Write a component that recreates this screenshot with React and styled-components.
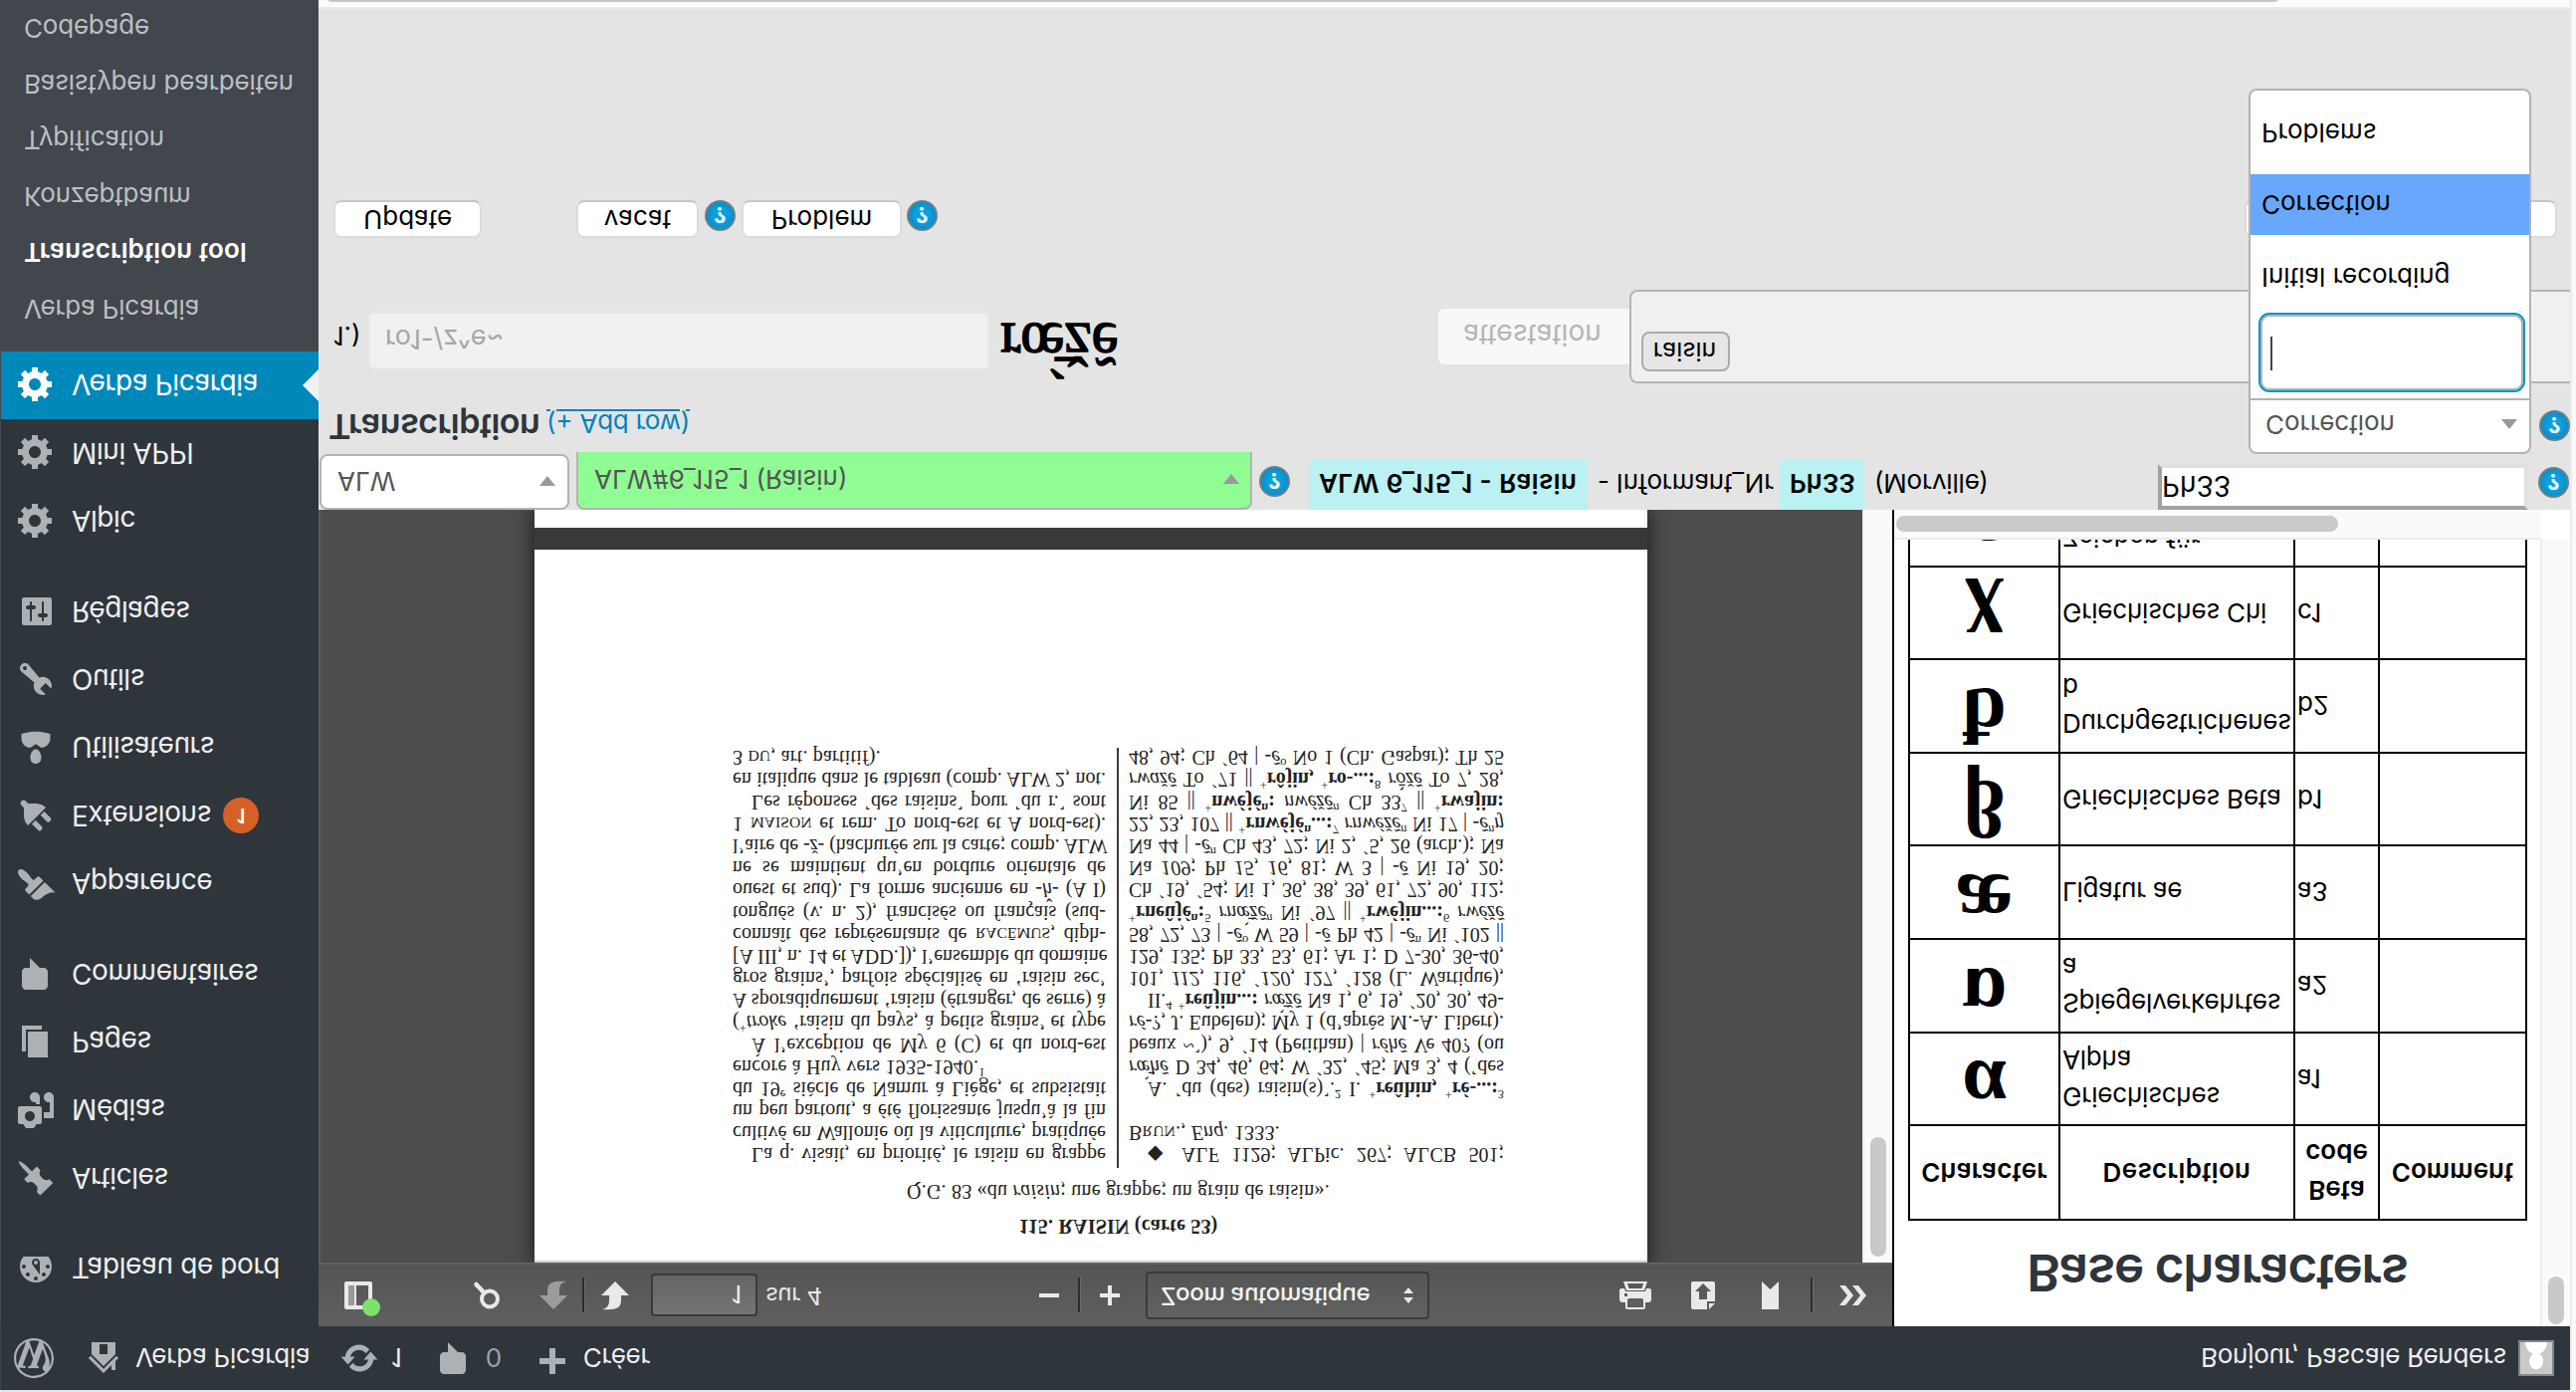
import React from 'react';
import styled, { createGlobalStyle, css } from 'styled-components';

const sans = `Inter, "Open Sans", "Liberation Sans", sans-serif`;
const serif = `"Liberation Serif", "DejaVu Serif", serif`;

const GlobalStyle = createGlobalStyle`
  * { box-sizing: border-box; }
  html, body { margin: 0; padding: 0; overflow: hidden; background: #e4e4e4; }
`;

const Screen = styled.div`
  width: 2588px;
  height: 1398px;
  display: flex;
  flex-direction: column;
  overflow: hidden;
  transform: scaleY(-1);
  font-family: ${sans};
  font-size: 26px;
  line-height: 1.4;
  color: #000;
  background: #e4e4e4;
`;

const TopEdge = styled.div`
  height: 2px;
  flex: none;
  background: #e6e6e6;
`;

const Columns = styled.div`
  display: flex;
  flex: 1;
  min-height: 0;
`;

const Frame = styled.div`
  width: 2582px;
  flex: none;
  display: flex;
  flex-direction: column;
`;

const Gutter = styled.div`
  flex: 1;
  background: #f9f9f9;
  border-left: 2px solid #ebebeb;
`;

const Label = styled.span`
  padding-top: 2px;
`;

/* ---------- admin bar ---------- */

const AdminBar = styled.header`
  height: 64px;
  flex: none;
  display: flex;
  align-items: center;
  padding: 0 16px 0 13px;
  background: #2e353b;
  color: #eee;
  border-left: 1px solid #3c4349;
`;

const BarItem = styled.div`
  display: flex;
  align-items: center;
  gap: ${(p) => p.$gap || 0}px;
  margin-left: ${(p) => (p.$push ? 'auto' : `${p.$ml || 0}px`)};
  letter-spacing: -0.25px;
  white-space: nowrap;
  color: ${(p) => (p.$dim ? '#9ca1a6' : '#eee')};
`;

const Avatar = styled.div`
  width: 36px;
  height: 36px;
  margin-left: 12px;
  border: 2px solid #82878c;
  background: #c9c9c9;
  svg { display: block; }
`;

const Glyph = styled.svg`
  display: block;
  flex: none;
  width: ${(p) => p.$size || 40}px;
  height: ${(p) => p.$size || 40}px;
  fill: ${(p) => p.$color || '#acb1b6'};
`;

/* ---------- side menu ---------- */

const Body = styled.div`
  display: flex;
  flex: 1;
  min-height: 0;
`;

const Sidebar = styled.nav`
  width: 320px;
  flex: none;
  display: flex;
  flex-direction: column;
  padding-top: 24.3px;
  background: #2e353b;
  border-left: 1px solid #434a50;
  overflow: hidden;
`;

const MenuItem = styled.div`
  position: relative;
  height: 68.4px;
  flex: none;
  display: flex;
  align-items: center;
  gap: 16px;
  padding-left: 15px;
  margin-top: ${(p) => (p.$section ? 22 : 0)}px;
  font-size: 28px;
  letter-spacing: -0.4px;
  color: ${(p) => (p.$active ? '#fff' : '#eee')};
  ${(p) =>
    p.$active &&
    css`
      margin-left: -1px;
      padding-left: 16px;
      background: #0088bb;
      &::after {
        content: '';
        position: absolute;
        right: 0;
        top: 18px;
        border: 16px solid transparent;
        border-left-width: 0;
        border-right-color: #f1f1f1;
      }
    `}
`;

const CountBadge = styled.span`
  width: 36px;
  height: 36px;
  margin-left: -4px;
  border-radius: 50%;
  background: #d76027;
  color: #fff;
  font-size: 20px;
  font-weight: 600;
  line-height: 37px;
  text-align: center;
`;

const SubMenu = styled.div`
  flex: 1;
  padding: 15px 0 0 23px;
  background: #42464d;
`;

const SubItem = styled.div`
  height: 56.4px;
  line-height: 56.4px;
  font-size: 26px;
  white-space: nowrap;
  color: ${(p) => (p.$current ? '#fff' : '#bcbfc3')};
  font-weight: ${(p) => (p.$current ? 600 : 400)};
  letter-spacing: ${(p) => (p.$current ? 0.15 : -0.2)}px;
`;

/* ---------- main panes ---------- */

const Main = styled.main`
  flex: 1;
  min-width: 0;
  display: flex;
  flex-direction: column;
`;

const Panes = styled.div`
  display: flex;
  height: 820px;
  flex: none;
`;

const Viewer = styled.section`
  width: 1581px;
  display: flex;
  flex-direction: column;
  background: #4d4d4d;
`;

const Toolbar = styled.div`
  height: 64px;
  flex: none;
  display: flex;
  align-items: center;
  padding: 0 24px 0 26px;
  background: linear-gradient(#606060, #545454);
  border-bottom: 2px solid #626262;
  color: #e6e6e6;
  font-size: 24px;
`;

const ToolIcon = styled.svg`
  display: block;
  flex: none;
  overflow: visible;
  width: ${(p) => p.$w}px;
  height: ${(p) => p.$h || 28}px;
  margin-left: ${(p) => p.$ml || 0}px;
  fill: ${(p) => p.$color || '#e9e9e9'};
`;

const Divider = styled.span`
  width: 3px;
  height: 35px;
  margin-left: ${(p) => p.$ml}px;
  background: #2c2c2c;
  border-right: 1px solid #6c6c6c;
`;

const PageInput = styled.div`
  width: 107px;
  height: 43px;
  margin-left: 22px;
  padding-right: 14px;
  border: 2px solid #3a3a3a;
  border-radius: 4px;
  background: linear-gradient(#757575, #646464);
  line-height: 41px;
  text-align: right;
  color: #f2f2f2;
`;

const PageCount = styled.span`
  width: 57px;
  margin-left: 8px;
  letter-spacing: -0.3px;
  white-space: nowrap;
`;

const ZoomSelect = styled.div`
  width: 285px;
  height: 48px;
  margin-left: 26px;
  padding: 0 14px 0 13px;
  display: flex;
  align-items: center;
  justify-content: space-between;
  border: 2px solid #3b3b3b;
  border-radius: 4px;
  background: linear-gradient(#626262, #555);
  color: #f2f2f2;
  font-weight: 500;
  white-space: nowrap;
  letter-spacing: -0.3px;
`;

const ViewerBody = styled.div`
  flex: 1;
  min-height: 0;
  display: flex;
  box-shadow: inset 2px 0 0 #5c5c5c;
`;

const PageArea = styled.div`
  flex: 1;
  padding-left: 217px;
  display: flex;
  flex-direction: column;
  overflow: hidden;
`;

const PageStack = styled.div`
  width: 1118px;
  height: 756px;
  background: #393939;
  box-shadow: 0 0 18px 2px rgba(0, 0, 0, 0.6);
  display: flex;
  flex-direction: column;
  gap: 22px;
`;

const Sheet = styled.article`
  height: ${(p) => p.$h}px;
  flex: none;
  padding: 25px 0 0 199px;
  background: #fff;
  font-family: ${serif};
  font-size: 20px;
  line-height: 22.2px;
  color: #222;
  box-shadow: ${(p) => (p.$first ? 'inset 0 2px 0 #cfcfcf' : 'none')};
`;

const SheetTitle = styled.div`
  width: 775px;
  text-align: center;
  font-weight: ${(p) => (p.$bold ? 700 : 400)};
  letter-spacing: ${(p) => p.$ls || 0}px;
  margin-bottom: 12.6px;
`;

const SheetColumns = styled.div`
  display: flex;
  width: 776px;
  height: 422px;
  margin-top: 2px;
`;

const TextColumn = styled.div`
  width: 377px;
  flex: none;
  padding-top: 2px;
  &:first-child {
    width: 388px;
    padding-right: 11px;
    border-right: 2px solid #3a3a3a;
  }
  &:last-child { margin-left: 10px; }
`;

const Line = styled.div`
  height: 22.18px;
  white-space: nowrap;
  padding-left: ${(p) => (p.$indent ? 19 : 0)}px;
  text-align-last: ${(p) => (p.$ragged ? 'left' : 'justify')};
  letter-spacing: ${(p) => (p.$ragged ? 0.2 : 0)}px;
  sup, sub { font-size: 0.62em; line-height: 0; }
  small { font-size: 0.78em; line-height: 0; }
`;

const VScroll = styled.div`
  width: 30px;
  flex: none;
  padding: ${(p) => p.$top}px 6px 0;
  background: #fafafa;
  border-left: 2px solid #ededed;
  &::before {
    content: '';
    display: block;
    width: 16px;
    height: ${(p) => p.$thumb}px;
    border-radius: 8px;
    background: #c9c9c9;
  }
`;

const Reference = styled.aside`
  flex: 1;
  display: flex;
  background: #fff;
  border-left: 2px solid #000;
`;

const ReferenceBody = styled.div`
  flex: 1;
  min-width: 0;
  display: flex;
  flex-direction: column;
`;

const ReferenceScroll = styled.div`
  height: 790px;
  flex: none;
  overflow: hidden;
`;

const HScroll = styled.div`
  height: 30px;
  flex: none;
  padding: 6px 2px;
  background: #fafafa;
  border-top: 2px solid #ececec;
  &::before {
    content: '';
    display: block;
    width: 444px;
    height: 16px;
    border-radius: 8px;
    background: #cacaca;
  }
`;

const SideScrollColumn = styled.div`
  display: flex;
  flex-direction: column;
  ${VScroll} { flex: 1; }
`;

const ScrollCorner = styled.div`
  width: 30px;
  height: 30px;
  background: #fff;
`;

const TableTitle = styled.h1`
  margin: 0;
  height: 106px;
  line-height: 107px;
  text-align: center;
  font-size: 51px;
  font-weight: 600;
  letter-spacing: -1.1px;
  color: #2e353b;
`;

const CharTable = styled.table`
  width: 622px;
  margin-left: 14px;
  table-layout: fixed;
  border-collapse: collapse;
`;

const HeadCell = styled.th`
  height: 95px;
  width: ${(p) => p.$w}px;
  padding: 2px 0 0;
  border: 2px solid #000;
  font-weight: 600;
  letter-spacing: ${(p) => p.$ls || 0}px;
`;

const Cell = styled.td`
  height: ${(p) => p.$h}px;
  padding: 2px 0 0 2px;
  border: 2px solid #000;
  vertical-align: middle;
  white-space: nowrap;
  letter-spacing: -0.2px;
`;

const CharCell = styled(Cell)`
  padding: 0;
  text-align: center;
  letter-spacing: 0;
  font: 700 80px/80px ${serif};
  span { display: block; height: 80px; margin-top: -20px; }
`;

/* ---------- transcription form ---------- */

const Form = styled.section`
  flex: 1;
  min-height: 0;
  display: flex;
  flex-direction: column;
  overflow: hidden;
`;

const FormRow = styled.div`
  height: ${(p) => p.$h}px;
  margin-top: ${(p) => p.$mt || 0}px;
  padding-left: ${(p) => p.$pl || 0}px;
  flex: none;
  display: flex;
  align-items: flex-start;
  white-space: nowrap;
`;

const Select = styled.div`
  width: ${(p) => p.$w}px;
  height: 56px;
  padding: ${(p) => (p.$green ? '2px 11px 0 16px' : '2px 12px 0 16px')};
  margin-left: ${(p) => p.$ml || 0}px;
  flex: none;
  display: flex;
  align-items: center;
  justify-content: space-between;
  background: #fff;
  border: 2px solid #b3b3b3;
  border-radius: 8px;
  color: #555;
  ${(p) =>
    p.$green &&
    css`
      height: 58px;
      background: #8ffd93;
      border-bottom: 0;
      border-radius: 8px 8px 0 0;
    `}
`;

const Caret = styled.i`
  width: 0;
  height: 0;
  border: 8px solid transparent;
  ${(p) =>
    p.$up
      ? 'border-top-width: 0; border-bottom: 10px solid #999;'
      : 'border-bottom-width: 0; border-top: 10px solid #999;'}
`;

const HelpBadge = styled.span`
  width: 31px;
  height: 31px;
  margin: ${(p) => p.$m || '0'};
  flex: none;
  border: 2px solid #6e8088;
  border-radius: 50%;
  background: radial-gradient(circle, #0b9fdd 40%, #087fb8);
  color: #e8f7ff;
  font-size: 22px;
  font-weight: 700;
  line-height: 28px;
  text-align: center;
`;

const Mark = styled.b`
  height: 51px;
  line-height: 53px;
  padding: 0 10px;
  margin-left: ${(p) => p.$ml || 0}px;
  width: ${(p) => p.$w}px;
  background: #bbf1f3;
  font-weight: 600;
  letter-spacing: ${(p) => p.$ls || 0}px;
`;

const Plain = styled.span`
  height: 51px;
  line-height: 53px;
  margin-left: ${(p) => p.$ml || 0}px;
  width: ${(p) => p.$w}px;
  letter-spacing: -0.2px;
`;

const InformantInput = styled.div`
  width: 372px;
  height: 46px;
  margin-left: 173px;
  border: 4px solid;
  border-color: #a1a1a1 #e0e0e0 #e0e0e0 #a1a1a1;
  background: #fff;
  font-size: 28px;
  line-height: 41px;
`;

const Heading = styled.h2`
  margin: 0;
  width: 218px;
  font-size: 34px;
  font-weight: 600;
  line-height: 51px;
  letter-spacing: -0.5px;
  text-indent: -1px;
  color: #2e353b;
`;

const AddLink = styled.a`
  margin-top: 6px;
  line-height: 46px;
  letter-spacing: -0.2px;
  color: #0085ba;
  text-decoration: underline;
  text-decoration-thickness: 2px;
  text-underline-offset: 3px;
`;

const StageSelect = styled.div`
  position: relative;
  width: 284px;
  height: 56px;
  margin: -2px 8px 0 auto;
  padding: 4px 12px 0 15px;
  display: flex;
  align-items: center;
  justify-content: space-between;
  background: #fff;
  border: 2px solid #b3b3b3;
  border-radius: 8px 8px 0 0;
  color: #555;
`;

const StageMenu = styled.div`
  position: absolute;
  z-index: 2;
  top: 52px;
  left: -2px;
  width: 284px;
  height: 313px;
  padding-top: 8px;
  background: #fff;
  border: 2px solid #b3b3b3;
  border-radius: 0 0 8px 8px;
  color: #000;
`;

const SearchBox = styled.div`
  width: 264px;
  height: 76px;
  margin: 0 0 5px 10px;
  padding: 18px 0 0 8px;
  border: 2px solid #b3b3b3;
  border-radius: 9px;
  outline: 2px solid #0a92c9;
  &::before {
    content: '';
    display: block;
    width: 2px;
    height: 34px;
    background: #444;
  }
`;

const Option = styled.div`
  height: ${(p) => p.$h}px;
  line-height: ${(p) => p.$h}px;
  margin-top: ${(p) => p.$mt || 0}px;
  padding-left: 11px;
  background: ${(p) => (p.$on ? '#67a8fd' : 'transparent')};
`;

const IndexLabel = styled.span`
  width: 35px;
  margin-top: 30px;
`;

const BetaInput = styled.div`
  width: 624px;
  height: 58px;
  margin-top: 14px;
  padding-left: 15px;
  border: 2px solid #e9e9e9;
  border-radius: 6px;
  background: #f1f1f1;
  color: #a6a6a6;
  font-size: 27px;
  line-height: 57px;
`;

const Rendered = styled.span`
  width: 440px;
  margin: 5px 0 0 11px;
  font: 400 61px/70px ${serif};
  -webkit-text-stroke: 1.4px #000;
`;

const KindButton = styled.div`
  width: 192px;
  height: 56px;
  margin-top: 19px;
  padding-right: 3px;
  border-radius: 6px 0 0 6px;
  background: #f8f8f8;
  color: #b2b6ba;
  font-size: 28px;
  line-height: 61px;
  text-align: center;
`;

const TagBox = styled.div`
  flex: 1;
  height: 94px;
  padding: 10px;
  border: 2px solid #b5b5b5;
  border-right: 0;
  border-radius: 8px 0 0 8px;
  background: #f0f0f0;
`;

const Tag = styled.div`
  width: 89px;
  height: 40px;
  padding-right: 2px;
  border: 2px solid #ababab;
  border-radius: 8px;
  background: #e6e6e6;
  line-height: 36px;
  font-size: 25px;
  text-align: center;
`;

const Button = styled.div`
  width: ${(p) => p.$w}px;
  height: 38px;
  margin-left: ${(p) => p.$ml || 0}px;
  flex: none;
  border-radius: 8px;
  border: 2px solid #dcdcdc;
  border-bottom-color: #c6c6c6;
  background: #fff;
  line-height: 34px;
  text-align: center;
`;

const BottomScroll = styled.div`
  height: 9px;
  flex: none;
  margin-right: -6px;
  padding: 5px 0 0 6px;
  background: #fbfbfb;
  border-top: 2px solid #ebebeb;
  overflow: hidden;
  &::before {
    content: '';
    display: block;
    width: 1966px;
    height: 16px;
    border-radius: 8px;
    background: #c6c6c6;
  }
`;

/* ---------- data ---------- */

const icons = {
  wordpress:
    'M20 10c0-5.51-4.49-10-10-10C4.48 0 0 4.49 0 10c0 5.52 4.48 10 10 10 5.51 0 10-4.48 10-10zM7.78 15.37L4.37 6.22c.55-.02 1.17-.08 1.17-.08.5-.06.44-1.13-.06-1.11 0 0-1.45.11-2.37.11-.18 0-.37 0-.58-.01C4.12 2.69 6.87 1.11 10 1.11c2.33 0 4.45.87 6.05 2.34-.68-.11-1.65.39-1.65 1.58 0 .74.45 1.36.9 2.1.35.61.55 1.36.55 2.46 0 1.49-1.4 5-1.4 5l-3.03-8.37c.54-.02.82-.17.82-.17.5-.05.44-1.25-.06-1.22 0 0-1.44.12-2.38.12-.87 0-2.33-.12-2.33-.12-.5-.03-.56 1.2-.06 1.22l.92.08 1.26 3.41zM17.41 10c.24-.64.74-1.87.43-4.25.7 1.29 1.05 2.71 1.05 4.25 0 3.29-1.73 6.24-4.4 7.78.97-2.59 1.94-5.2 2.92-7.78zM6.1 18.09C3.12 16.65 1.11 13.53 1.11 10c0-1.3.23-2.48.72-3.59C3.25 10.3 4.67 14.2 6.1 18.09zm4.03-6.63l2.58 6.98c-.86.29-1.76.45-2.71.45-.79 0-1.57-.11-2.29-.33.81-2.38 1.62-4.74 2.42-7.1z',
  home: 'M16 8.5l1.53 1.53-1.06 1.06L10 4.6l-6.47 6.47-1.06-1.06L10 2.47l4 4V4h2v4.5zm-6-2.46l6 5.99V18H4v-5.97zM12 17v-5H8v5h4z',
  update:
    'M10.2 3.28c3.53 0 6.43 2.61 6.92 6h2.08l-3.5 4-3.5-4h2.32c-.45-1.97-2.21-3.45-4.32-3.45-1.45 0-2.73.71-3.54 1.78L4.95 5.66C6.23 4.2 8.11 3.28 10.2 3.28zm-.4 13.44c-3.52 0-6.43-2.61-6.92-6H.8l3.5-4c1.17 1.33 2.33 2.67 3.5 4H5.48c.45 1.97 2.21 3.45 4.32 3.45 1.45 0 2.73-.71 3.54-1.78l1.71 1.95c-1.28 1.46-3.15 2.38-5.25 2.38z',
  comments:
    'M5 2h9c1.1 0 2 .9 2 2v7c0 1.1-.9 2-2 2h-2l-5 5v-5H5c-1.1 0-2-.9-2-2V4c0-1.1.9-2 2-2z',
  plus: 'M17 7v3h-5v5H9v-5H4V7h5V2h3v5h5z',
  dashboard:
    'M3.76 16h12.48c1.1-1.37 1.76-3.11 1.76-5 0-4.42-3.58-8-8-8s-8 3.58-8 8c0 1.89.66 3.63 1.76 5zM10 4c.55 0 1 .45 1 1s-.45 1-1 1-1-.45-1-1 .45-1 1-1zM6 6c.55 0 1 .45 1 1s-.45 1-1 1-1-.45-1-1 .45-1 1-1zm8 0c.55 0 1 .45 1 1s-.45 1-1 1-1-.45-1-1 .45-1 1-1zm-5.37 5.55L12 7v6c0 1.1-.9 2-2 2s-2-.9-2-2c0-.57.24-1.08.63-1.45zM4 10c.55 0 1 .45 1 1s-.45 1-1 1-1-.45-1-1 .45-1 1-1zm12 0c.55 0 1 .45 1 1s-.45 1-1 1-1-.45-1-1 .45-1 1-1zm-5 3c0-.55-.45-1-1-1s-1 .45-1 1 .45 1 1 1 1-.45 1-1z',
  post: 'M10.44 3.02l1.82-1.82 6.36 6.35-1.83 1.82c-1.05-.68-2.48-.57-3.41.36l-.75.75c-.92.93-1.04 2.35-.35 3.41l-1.83 1.82-2.41-2.41-2.8 2.79c-.42.42-3.38 2.71-3.8 2.29s1.86-3.39 2.28-3.81l2.79-2.79L4.1 9.36l1.83-1.82c1.05.69 2.48.57 3.4-.36l.75-.75c.93-.92 1.05-2.35.36-3.41z',
  media:
    'M13 11V4c0-.55-.45-1-1-1h-1.67L9 1H5L3.67 3H2c-.55 0-1 .45-1 1v7c0 .55.45 1 1 1h10c.55 0 1-.45 1-1zM7 4.5c1.38 0 2.5 1.12 2.5 2.5S8.38 9.5 7 9.5 4.5 8.38 4.5 7 5.62 4.5 7 4.5zM14 6h5v10.5c0 1.38-1.12 2.5-2.5 2.5S14 17.88 14 16.5s1.12-2.5 2.5-2.5c.17 0 .34.02.5.05V9h-3V6zm-4 8.05V13h2v3.5c0 1.38-1.12 2.5-2.5 2.5S7 17.88 7 16.5 8.12 14 9.5 14c.17 0 .34.02.5.05z',
  page: 'M6 15V2h10v13H6zm-1 1h8v2H3V5h2v11z',
  appearance:
    'M14.48 11.06L7.41 3.99l1.5-1.5c.5-.56 2.3-.47 3.51.32 1.21.8 1.43 1.28 2.91 2.1 1.18.64 2.45 1.26 4.45.85zm-.71.71L6.7 4.7 4.93 6.47c-.39.39-.39 1.02 0 1.41l1.06 1.06c.39.39.39 1.03 0 1.42-.6.6-1.43 1.11-2.21 1.69-.35.26-.7.53-1.01.84C1.43 14.23.4 16.08 1.4 17.07c.99 1 2.84-.03 4.18-1.36.31-.31.58-.66.85-1.02.57-.78 1.08-1.61 1.69-2.21.39-.39 1.02-.39 1.41 0l1.06 1.06c.39.39 1.02.39 1.41 0z',
  plugins:
    'M13.11 4.36L9.87 7.6 8 5.73l3.24-3.24c.35-.34 1.05-.2 1.56.32.52.51.66 1.21.31 1.55zm-8 1.77l.91-1.12 9.01 9.01-1.19.84c-.71.71-2.63 1.16-3.82 1.16H6.14L4.9 17.26c-.59.59-1.54.59-2.12 0-.59-.58-.59-1.53 0-2.12l1.24-1.24v-3.88c0-1.13.4-3.19 1.09-3.89zm7.26 3.97l3.24-3.24c.34-.35 1.04-.21 1.55.31.52.51.66 1.21.31 1.55l-3.24 3.25z',
  users:
    'M10 9.25c-2.27 0-2.73-3.44-2.73-3.44C7 4.02 7.82 2 9.97 2c2.16 0 2.98 2.02 2.71 3.81 0 0-.41 3.44-2.68 3.44zm0 2.57L12.72 10c2.39 0 4.52 2.33 4.52 4.53v2.49s-3.65 1.13-7.24 1.13c-3.65 0-7.24-1.13-7.24-1.13v-2.49c0-2.25 1.94-4.48 4.47-4.48z',
  tools:
    'M16.68 9.77c-1.34 1.34-3.3 1.67-4.95.99l-5.41 6.52c-.99.99-2.59.99-3.58 0s-.99-2.59 0-3.57l6.52-5.42c-.68-1.65-.35-3.61.99-4.95 1.28-1.28 3.12-1.62 4.72-1.06l-2.89 2.89 2.82 2.82 2.86-2.87c.53 1.58.18 3.39-1.08 4.65zM3.81 16.21c.4.39 1.04.39 1.43 0 .4-.4.4-1.04 0-1.43-.39-.4-1.03-.4-1.43 0-.39.39-.39 1.03 0 1.43z',
  settings:
    'M18 16V4c0-.55-.45-1-1-1H4c-.55 0-1 .45-1 1v12c0 .55.45 1 1 1h13c.55 0 1-.45 1-1zM8 11h1c.55 0 1 .45 1 1s-.45 1-1 1H8v1.5c0 .28-.22.5-.5.5s-.5-.22-.5-.5V13H6c-.55 0-1-.45-1-1s.45-1 1-1h1V5.5c0-.28.22-.5.5-.5s.5.22.5.5V11zm5-2h-1c-.55 0-1-.45-1-1s.45-1 1-1h1V5.5c0-.28.22-.5.5-.5s.5.22.5.5V7h1c.55 0 1 .45 1 1s-.45 1-1 1h-1v5.5c0 .28-.22.5-.5.5s-.5-.22-.5-.5V9z',
  generic:
    'M18 12h-2.18c-.17.7-.44 1.35-.81 1.93l1.54 1.54-2.1 2.1-1.54-1.54c-.58.36-1.23.63-1.91.79V19H8v-2.18c-.68-.16-1.33-.43-1.91-.79l-1.54 1.54-2.12-2.12 1.54-1.54c-.36-.58-.63-1.23-.79-1.91H1V9.03h2.17c.16-.7.44-1.35.8-1.94L2.43 5.55l2.1-2.1 1.54 1.54c.58-.37 1.24-.64 1.93-.81V2h3v2.18c.68.16 1.33.43 1.91.79l1.54-1.54 2.12 2.12-1.54 1.54c.36.59.64 1.24.8 1.94H18V12zm-8.5 1.5c1.66 0 3-1.34 3-3s-1.34-3-3-3-3 1.34-3 3 1.34 3 3 3z',
};

const Icon = ({ name, size, color }) => (
  <Glyph viewBox="0 0 20 20" $size={size} $color={color}>
    <path d={icons[name]} fillRule="evenodd" />
  </Glyph>
);

const menu = [
  { icon: 'dashboard', label: 'Tableau de bord' },
  { icon: 'post', label: 'Articles', section: true },
  { icon: 'media', label: 'Médias' },
  { icon: 'page', label: 'Pages' },
  { icon: 'comments', label: 'Commentaires' },
  { icon: 'appearance', label: 'Apparence', section: true },
  { icon: 'plugins', label: 'Extensions', count: 1 },
  { icon: 'users', label: 'Utilisateurs' },
  { icon: 'tools', label: 'Outils' },
  { icon: 'settings', label: 'Réglages' },
  { icon: 'generic', label: 'Alpic', section: true },
  { icon: 'generic', label: 'Mini APPI' },
  { icon: 'generic', label: 'Verba Picardia', active: true },
];

const subMenu = [
  'Verba Picardia',
  'Transcription tool',
  'Konzeptbaum',
  'Typification',
  'Basistypen bearbeiten',
  'Codepage',
];

const characters = [
  { char: 'α', text: ['Griechisches', 'Alpha'], code: 'a1', h: 93 },
  { char: 'ɒ', text: ['Spiegelverkehrtes', 'a'], code: 'a2', h: 94 },
  { char: 'æ', text: ['Ligatur ae'], code: 'a3', h: 94 },
  { char: 'β', text: ['Griechisches Beta'], code: 'b1', h: 93 },
  { char: 'ƀ', text: ['Durchgestrichenes', 'b'], code: 'b2', h: 94 },
  { char: 'χ', text: ['Griechisches Chi'], code: 'c1', h: 93 },
  { char: 'c', text: ['Zeichen für', '\u00a0'], code: '', h: 94 },
];

const leftColumn = [
  { indent: true, t: 'La q. visait, en priorité, le raisin en grappe' },
  { t: 'cultivé en Wallonie où la viticulture, pratiquée' },
  { t: 'un peu partout, a été florissante jusqu’à la fin' },
  { t: <>du 19<sup>e</sup> siècle de Namur à Liège, et subsistait</> },
  { ragged: true, t: <>encore à Huy vers 1935-1940.<sup>1</sup></> },
  { indent: true, t: 'À l’exception de My 6 (C) et du nord-est' },
  { t: <>(<sup>+</sup><i>troke</i> ‘raisin du pays, à petits grains’ et type</> },
  { t: 'A sporadiquement ‘raisin (étranger, de serre) à' },
  { t: 'gros grains’, parfois spécialisé en ‘raisin sec’' },
  { t: '[A III, n. 14 et ADD.]), l’ensemble du domaine' },
  { t: <>connaît des représentants de <small>RACĒMUS</small>, diph-</> },
  { t: 'tongués (v. n. 2), francisés ou français (sud-' },
  { t: <>ouest et sud). La forme ancienne en -<i>ȟ</i>- (A I)</> },
  { t: 'ne se maintient qu’en bordure orientale de' },
  { t: <>l’aire de -<i>ž</i>- (hachurée sur la carte; comp. ALW</> },
  { t: <>1 <small>MAISON</small> et rem. To nord-est et A nord-est).</> },
  { indent: true, t: 'Les réponses ˹des raisins˺ pour ˹du r.˺ sont' },
  { t: 'en italique dans le tableau (comp. ALW 2, not.' },
  { ragged: true, t: <>3 <small>DU</small>, art. partitif).</> },
];

const rightColumn = [
  { indent: true, t: '◆ ALF 1129; ALPic. 267; ALCB 501;' },
  { ragged: true, t: <>B<small>RUN</small>., <i>Enq.</i> 1333.</> },
  { t: '' },
  { indent: true, t: <>A. ˹du (des) raisin(s)˺.<sup>2</sup> I. <sup>+</sup><b>reûhin,</b> <sup>+</sup><b>ré-...:</b><sup>3</sup></> },
  { t: <><i>rœ̄̀hẽ</i> D 34, 46, 64; W ´32, ´45; Ma 3, 4 (˹des</> },
  { t: <>beaux ~˺), 9, ´14 (Petithan) | <i>réhẽ</i> Ve 40? (ou</> },
  { t: <><i>ré-</i>?, J. Eubelen); My 1 (d’après M.-A. Libert).</> },
  { indent: true, t: <>II.<sup>4</sup> <sup>+</sup><b>reûjin...:</b> <i>rœ̄̀žẽ</i> Na 1, 6, 19, ´20, 30, 49-</> },
  { t: <>101, <i>112</i>, 116, ´<i>120</i>, 127, ´128 (L. Wartique),</> },
  { t: '129, 135; Ph 33, 53, 61; Ar 1; D 7-30, 36-40,' },
  { t: <>58, 72, 73 | -<i>ẽ</i><sup>o</sup> W 59 | -<i>ẽ</i> Ph 42 | -<i>ẽ</i><sup>n</sup> Ni ´102 ||</> },
  { t: <><sup>+</sup><b>rneûjé<sup>n</sup>:</b><sup>5</sup> <i>rnœ̄̀žẽ<sup>n</sup></i> Ni ´97 || <sup>+</sup><b>rwéjin...:</b><sup>6</sup> <i>rwéžẽ</i></> },
  { t: 'Ch ´19, ´54; Ni 1, 36, 38, 39, 61, 72, 90, 112;' },
  { t: <>Na <i>109</i>; Ph <i>15</i>, <i>16</i>, 81; W 3 | -<i>ẽ</i> Ni 19, 20;</> },
  { t: <>Na 44 | -<i>ẽ<sup>n</sup></i> Ch 43, 72; Ni 2, ´5, 26 (arch.); Na</> },
  { t: <>22, 23, 107 || <sup>+</sup><b>rnwéjé<sup>n</sup>...:</b><sup>7</sup> <i>rnwéžẽ<sup>n</sup></i> Ni 17 | -<i>ẽ<sup>n</sup>ŋ</i></> },
  { t: <>Ni 85 || <sup>+</sup><b>nwéjé<sup>n</sup>:</b> <i>nwéžẽ<sup>n</sup></i> Ch 33<sup>7</sup> || <sup>+</sup><b>rwajin:</b></> },
  { t: <><i>rwažẽ</i> To ´71 || <sup>+</sup><b>rôjin,</b> <sup>+</sup><b>ro-...:</b><sup>8</sup> <i>rṑžẽ</i> To 7, 28,</> },
  { t: <>48, 94; Ch ´64 | -<i>ẽ</i><sup>o</sup> No 1 (Ch. Gaspar); Th 25</> },
];

const Lines = ({ rows }) => (
  <TextColumn>
    {rows.map((r, i) => (
      <Line key={i} $indent={r.indent} $ragged={r.ragged}>
        {r.t}
      </Line>
    ))}
  </TextColumn>
);

/* ---------- page ---------- */

const TopBar = () => (
  <AdminBar>
    <Icon name="wordpress" />
    <BarItem $ml={30} $gap={12}>
      <Icon name="home" />
      <Label>Verba Picardia</Label>
    </BarItem>
    <BarItem $ml={30} $gap={12}>
      <Icon name="update" />
      <Label>1</Label>
    </BarItem>
    <BarItem $ml={32} $gap={12} $dim>
      <Icon name="comments" />
      <Label>0</Label>
    </BarItem>
    <BarItem $ml={30} $gap={12}>
      <Icon name="plus" />
      <Label>Créer</Label>
    </BarItem>
    <BarItem $push>
      <Label>Bonjour, Pascale Renders</Label>
    </BarItem>
    <Avatar>
      <svg width="32" height="32" viewBox="0 0 32 32" fill="#fff">
        <ellipse cx="16" cy="13" rx="7" ry="8.5" />
        <path d="M5 32c0-6 4-12 11-12s11 6 11 12z" />
      </svg>
    </Avatar>
  </AdminBar>
);

const SideMenu = () => (
  <Sidebar>
    {menu.map((m) => (
      <MenuItem key={m.label} $section={m.section} $active={m.active}>
        <Icon name={m.icon} color={m.active ? '#fff' : undefined} />
        <Label>{m.label}</Label>
        {m.count && <CountBadge>{m.count}</CountBadge>}
      </MenuItem>
    ))}
    <SubMenu>
      {subMenu.map((s, i) => (
        <SubItem key={s} $current={i === 1}>
          {s}
        </SubItem>
      ))}
    </SubMenu>
  </Sidebar>
);

const PdfToolbar = () => (
  <Toolbar>
    <ToolIcon $w={28} viewBox="0 0 28 28">
      <path fillRule="evenodd" d="M2 0h24a2 2 0 0 1 2 2v24a2 2 0 0 1-2 2H2a2 2 0 0 1-2-2V2a2 2 0 0 1 2-2zM12 4v20h12V4z" />
      <path d="M4 4h6v20H4z" fill="#9a9a9a" />
      <circle cx="27" cy="2" r="9" fill="#7fe06a" />
    </ToolIcon>
    <ToolIcon $w={26} $ml={102} viewBox="0 0 26 28">
      <circle cx="16" cy="10.5" r="8" fill="none" stroke="#e9e9e9" strokeWidth="4" />
      <path d="M10 17l-7.5 8" stroke="#e9e9e9" strokeWidth="4.5" strokeLinecap="round" />
    </ToolIcon>
    <ToolIcon $w={28} $ml={40} viewBox="0 0 28 28" $color="#9c9c9c">
      <path d="M14 0l14 14h-8v5c0 5 2 8 7 9-13 1-19-1-19-9v-5H0z" />
    </ToolIcon>
    <Divider $ml={15} />
    <ToolIcon $w={28} $ml={16} viewBox="0 0 28 28">
      <path d="M14 28l14-14h-8V9c0-8-6-10-19-9 5 1 7 4 7 9v5H0z" />
    </ToolIcon>
    <PageInput>1</PageInput>
    <PageCount>sur 4</PageCount>
    <ToolIcon $w={20} $h={20} $ml={218} viewBox="0 0 20 20">
      <path d="M0 8h20v4H0z" />
    </ToolIcon>
    <Divider $ml={19} />
    <ToolIcon $w={20} $h={20} $ml={19} viewBox="0 0 20 20">
      <path d="M0 8h8V0h4v8h8v4h-8v8H8v-8H0z" />
    </ToolIcon>
    <ZoomSelect>
      Zoom automatique
      <ToolIcon $w={10} $h={16} viewBox="0 0 10 16">
        <path d="M5 0l5 6H0zM5 16l5-6H0z" />
      </ToolIcon>
    </ZoomSelect>
    <ToolIcon $w={32} $ml={191} viewBox="0 0 32 28">
      <path d="M8 0h16a2 2 0 0 1 2 2v7a3 3 0 0 1-3 3H9a3 3 0 0 1-3-3V2a2 2 0 0 1 2-2z" />
      <path fillRule="evenodd" d="M3 7h26a3 3 0 0 1 3 3v9a2 2 0 0 1-2 2h-3l-1-3H6l-1 3H2a2 2 0 0 1-2-2v-9a3 3 0 0 1 3-3zm2 6v3h3v-3z" />
      <path d="M8 2h16v7a2 2 0 0 1-2 2H10a2 2 0 0 1-2-2z" fill="#5e5e5e" />
      <path fillRule="evenodd" d="M7 19h18l3 9H4zm2.5 2l-1.5 5h16l-1.5-5z" />
    </ToolIcon>
    <ToolIcon $w={24} $ml={40} viewBox="0 0 24 28">
      <path fillRule="evenodd" d="M2 0h14v8h8v18a2 2 0 0 1-2 2H2a2 2 0 0 1-2-2V2a2 2 0 0 1 2-2zm6 10v8H4l8 8 8-8h-4v-8z" />
      <path d="M18 0l6 6h-6z" />
    </ToolIcon>
    <ToolIcon $w={17} $ml={47} viewBox="0 0 17 28">
      <path d="M0 0h17v28l-8.5-8L0 28z" />
    </ToolIcon>
    <Divider $ml={32} />
    <ToolIcon $w={27} $h={20} $ml={26} viewBox="0 0 27 20">
      <path d="M0 0h6l8 10-8 10H0l8-10zM13 0h6l8 10-8 10h-6l8-10z" />
    </ToolIcon>
  </Toolbar>
);

const PdfViewer = () => (
  <Viewer>
    <PdfToolbar />
    <ViewerBody>
      <PageArea>
        <PageStack>
          <Sheet $h={716} $first>
            <SheetTitle $bold $ls={0.2}>115. RAISIN (carte 53)</SheetTitle>
            <SheetTitle $ls={0.2}>
              Q.G. 83 «du <i>raisin</i>; une grappe; un grain de raisin».
            </SheetTitle>
            <SheetColumns>
              <Lines rows={leftColumn} />
              <Lines rows={rightColumn} />
            </SheetColumns>
          </Sheet>
          <Sheet $h={18} />
        </PageStack>
      </PageArea>
      <VScroll $top={6} $thumb={120} />
    </ViewerBody>
  </Viewer>
);

const CharacterReference = () => (
  <Reference>
    <ReferenceBody>
      <ReferenceScroll>
        <TableTitle>Base characters</TableTitle>
        <CharTable>
          <thead>
            <tr>
              <HeadCell $w={151} $ls={0.2}>Character</HeadCell>
              <HeadCell $w={236} $ls={0.35}>Description</HeadCell>
              <HeadCell $w={85}>Beta code</HeadCell>
              <HeadCell $w={148}>Comment</HeadCell>
            </tr>
          </thead>
          <tbody>
            {characters.map((c) => (
              <tr key={c.char}>
                <CharCell $h={c.h}>
                  <span>{c.char}</span>
                </CharCell>
                <Cell>
                  {c.text.map((t) => (
                    <div key={t}>{t}</div>
                  ))}
                </Cell>
                <Cell>{c.code}</Cell>
                <Cell />
              </tr>
            ))}
          </tbody>
        </CharTable>
      </ReferenceScroll>
      <HScroll />
    </ReferenceBody>
    <SideScrollColumn>
      <VScroll $top={2} $thumb={48} />
      <ScrollCorner />
    </SideScrollColumn>
  </Reference>
);

const TranscriptionForm = () => (
  <Form>
    <FormRow $h={58}>
      <Select $w={251} $ml={1}>
        ALW <Caret />
      </Select>
      <Select $w={679} $ml={7} $green>
        ALW#6_115_1 (Raisin) <Caret />
      </Select>
      <HelpBadge $m="13px 19px 0 7px">?</HelpBadge>
      <Mark $w={280} $ls={0.45}>ALW 6_115_1 - Raisin</Mark>
      <Plain $ml={10} $w={183}>- Informant_Nr</Plain>
      <Mark $w={85}>Ph33</Mark>
      <Plain $ml={10} $w={112}>(Morville)</Plain>
      <InformantInput>Ph33</InformantInput>
      <HelpBadge $m="12px 0 0 10px">?</HelpBadge>
    </FormRow>
    <FormRow $h={69} $pl={11}>
      <Heading>Transcription</Heading>
      <AddLink>(+ Add row)</AddLink>
      <StageSelect>
        Correction <Caret $up />
        <StageMenu>
          <SearchBox />
          <Option $h={60} $mt={8}>Initial recording</Option>
          <Option $h={61} $mt={12} $on>Correction</Option>
          <Option $h={60} $mt={12}>Problems</Option>
        </StageMenu>
      </StageSelect>
      <HelpBadge $m="11px 0 0 0">?</HelpBadge>
    </FormRow>
    <FormRow $h={94} $pl={15}>
      <IndexLabel>1.)</IndexLabel>
      <BetaInput>ro1-/z^e~</BetaInput>
      <Rendered>rœ̄́žẽ</Rendered>
      <KindButton>attestation</KindButton>
      <TagBox>
        <Tag>raisin</Tag>
      </TagBox>
    </FormRow>
    <FormRow $h={38} $mt={52} $pl={15}>
      <Button $w={149}>Update</Button>
      <Button $w={123} $ml={95}>vacat</Button>
      <HelpBadge $m="7px 6px 0 6px">?</HelpBadge>
      <Button $w={161}>Problem</Button>
      <HelpBadge $m="7px 0 0 5px">?</HelpBadge>
      <Button $w={314} $ml={1313} />
    </FormRow>
  </Form>
);

export default function App() {
  return (
    <>
      <GlobalStyle />
      <Screen>
        <TopEdge />
        <Columns>
          <Frame>
            <TopBar />
            <Body>
              <SideMenu />
              <Main>
                <Panes>
                  <PdfViewer />
                  <CharacterReference />
                </Panes>
                <TranscriptionForm />
                <BottomScroll />
              </Main>
            </Body>
          </Frame>
          <Gutter />
        </Columns>
      </Screen>
    </>
  );
}
